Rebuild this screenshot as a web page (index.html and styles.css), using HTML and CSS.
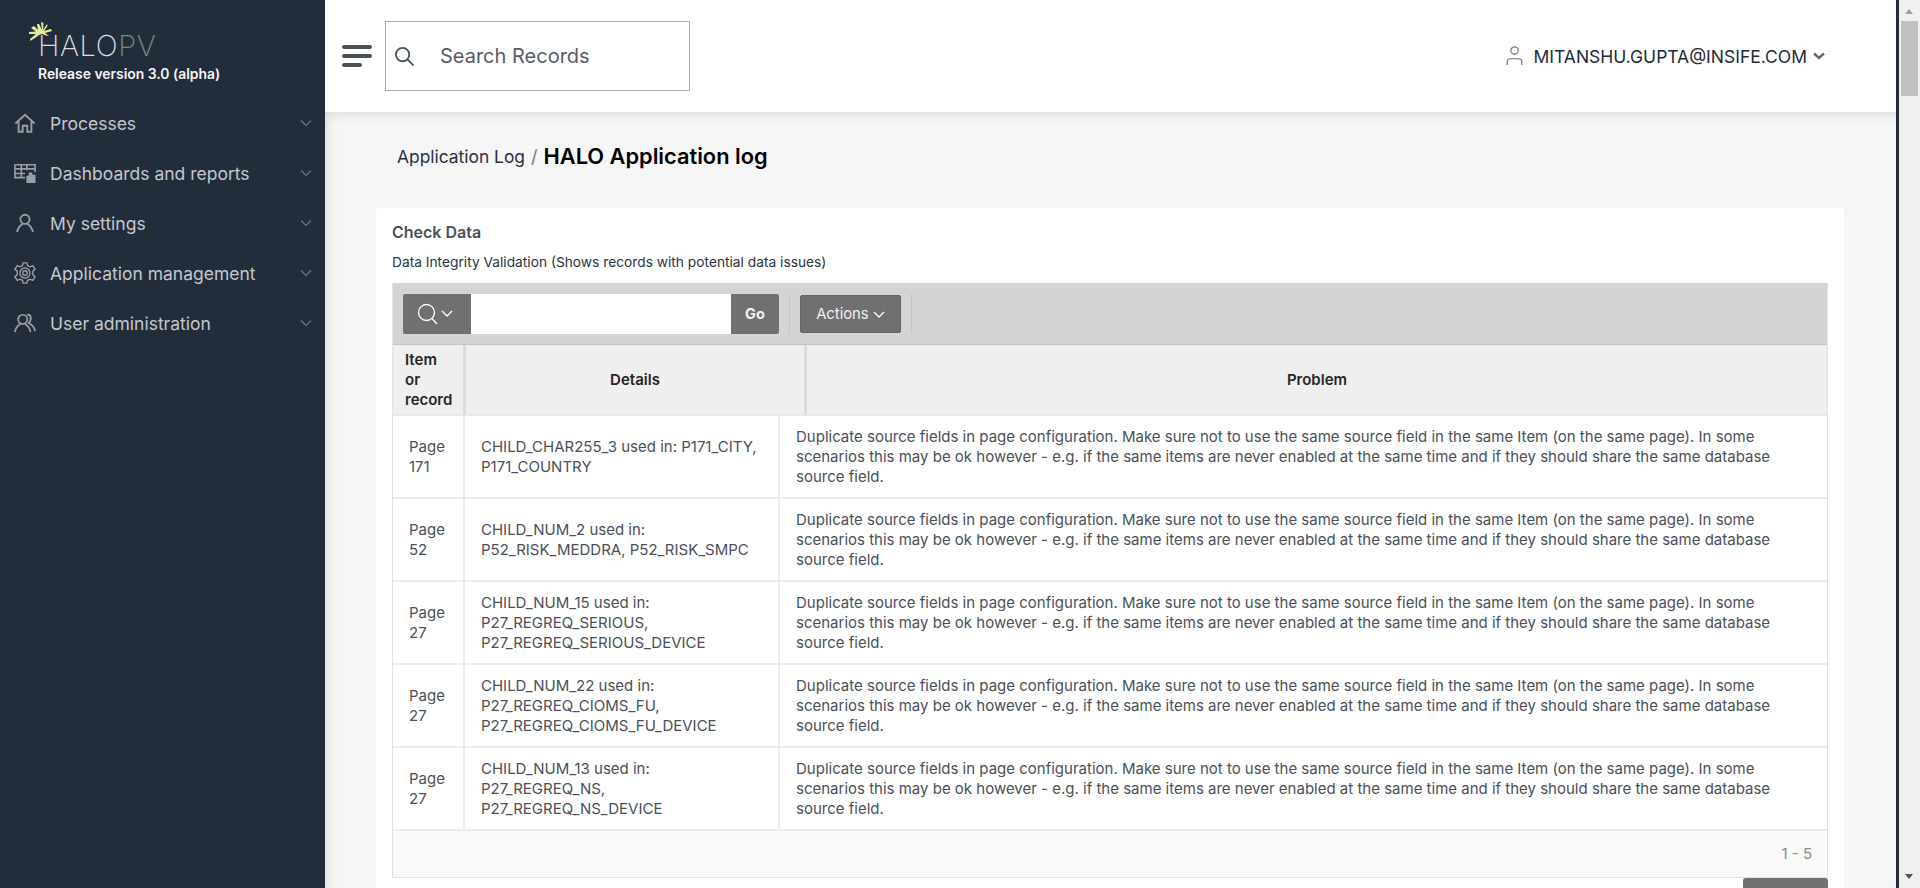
FILE: index.html
```html
<!DOCTYPE html>
<html lang="en">
<head>
    <meta charset="UTF-8">
    <title>HALO Application log</title>
    <link rel="stylesheet" href="styles.css">
</head>
<body>
    <div class="app">
        <!-- left navigation -->
        <aside class="sidebar">
            <div class="brand">
                <div class="logo">
                    <svg class="logo-spark" width="24" height="22" viewBox="0 0 24 22" fill="#e6eb9c">
                        <path d="M13 8 L12 0 L14.500 1 L14 8 L18 2 L18.500 4 L15 9 L22 7 L23 9 L16 11 L20 14 L17 13.500 L13 12 L10 13 L6 16 L1 19 L1 17 L7 12 L0 12 L0 10 L7 9.500 L2 6 L5 4 L9 8 L8 2 L10 2 Z"/>
                    </svg>
                    <span class="logo-halo">HALO</span><span class="logo-pv">PV</span>
                </div>
                <div class="release">Release version 3.0 (alpha)</div>
            </div>
            <nav class="nav">
                <a class="nav-item">
                    <svg class="nav-icon" viewBox="0 0 24 24" fill="none" stroke="currentColor" stroke-width="2"><path d="M1.500 12.500 L12 3 L22.500 12.500 M5 10 V21.500 H9.500 V15 H14.500 V21.500 H19 V10"/></svg>
                    <span class="nav-label">Processes</span>
                    <svg class="nav-caret" viewBox="0 0 12 8" fill="none" stroke="currentColor" stroke-width="1.200"><path d="M1 1.500 L6 6.500 L11 1.500"/></svg>
                </a>
                <a class="nav-item">
                    <svg class="nav-icon" viewBox="0 0 24 24" fill="none" stroke="currentColor" stroke-width="1.800"><path d="M1 3 H23 V11 M1 3 V17 H12 M1 7.500 H22 M1 12.500 H12 M8 3 V17 M14 3 V9"/><path d="M13.500 15 H16 V11.500 H20 V14 H23.500 V23 H13.500 Z" fill="currentColor" stroke="none"/></svg>
                    <span class="nav-label">Dashboards and reports</span>
                    <svg class="nav-caret" viewBox="0 0 12 8" fill="none" stroke="currentColor" stroke-width="1.200"><path d="M1 1.500 L6 6.500 L11 1.500"/></svg>
                </a>
                <a class="nav-item">
                    <svg class="nav-icon" viewBox="0 0 24 24" fill="none" stroke="currentColor" stroke-width="2"><circle cx="12" cy="8" r="5"/><path d="M3.500 22 C4 16.500 8 14 9.500 13 M20.500 22 C20 16.500 16 14 14.500 13"/></svg>
                    <span class="nav-label">My settings</span>
                    <svg class="nav-caret" viewBox="0 0 12 8" fill="none" stroke="currentColor" stroke-width="1.200"><path d="M1 1.500 L6 6.500 L11 1.500"/></svg>
                </a>
                <a class="nav-item">
                    <svg class="nav-icon" viewBox="0 0 24 24" fill="none" stroke="currentColor" stroke-width="1.500"><circle cx="12" cy="12" r="2.500"/><circle cx="12" cy="12" r="5.500"/><path d="M10 1 H14 L14.800 4 L17.500 5.300 L20.500 4 L23 8 L20.500 10 V14 L23 16 L20.500 20 L17.500 18.700 L14.800 20 L14 23 H10 L9.200 20 L6.500 18.700 L3.500 20 L1 16 L3.500 14 V10 L1 8 L3.500 4 L6.500 5.300 L9.200 4 Z"/></svg>
                    <span class="nav-label">Application management</span>
                    <svg class="nav-caret" viewBox="0 0 12 8" fill="none" stroke="currentColor" stroke-width="1.200"><path d="M1 1.500 L6 6.500 L11 1.500"/></svg>
                </a>
                <a class="nav-item">
                    <svg class="nav-icon" viewBox="0 0 24 24" fill="none" stroke="currentColor" stroke-width="1.900"><circle cx="9.500" cy="8" r="5"/><path d="M1 22 C1.500 17 4.500 14.500 7 13 M18 22 C17.500 17 14.500 14.500 12 13 M14 3 C18.500 2 20 8 16 12 C20 14 22.500 17 23 21"/></svg>
                    <span class="nav-label">User administration</span>
                    <svg class="nav-caret" viewBox="0 0 12 8" fill="none" stroke="currentColor" stroke-width="1.200"><path d="M1 1.500 L6 6.500 L11 1.500"/></svg>
                </a>
            </nav>
        </aside>

        <div class="main">
            <!-- top bar -->
            <header class="topbar">
                <div class="burger"><span></span><span></span><span class="short"></span></div>
                <div class="global-search">
                    <svg class="global-search-icon" viewBox="0 0 22 22" fill="none" stroke="#4c5560" stroke-width="2"><circle cx="9" cy="9" r="7"/><path d="M14 14 L20.500 20.500"/></svg>
                    <span>Search Records</span>
                </div>
                <div class="user">
                    <svg class="user-icon" viewBox="0 0 18 22" fill="none" stroke="#777" stroke-width="1.300"><circle cx="9" cy="5" r="4"/><path d="M1 21 V17 C1 15 3 14 5 14 H13 C15 14 17 15 17 17 V21"/></svg>
                    <span class="user-name">MITANSHU.GUPTA@INSIFE.COM</span>
                    <svg class="user-caret" viewBox="0 0 12 8" fill="none" stroke="#666" stroke-width="2.400"><path d="M1 1.500 L6 6 L11 1.500"/></svg>
                </div>
            </header>

            <div class="content">
                <div class="breadcrumb">
                    <span class="crumb">Application Log</span>
                    <span class="crumb-sep">/</span>
                    <h1 class="crumb-title">HALO Application log</h1>
                </div>

                <section class="card">
                    <h2 class="card-title">Check Data</h2>
                    <p class="card-sub">Data Integrity Validation (Shows records with potential data issues)</p>

                    <div class="report">
                        <div class="toolbar">
                            <div class="search-group">
                                <button class="btn btn-search">
                                    <svg width="21" height="22" viewBox="0 0 21 22" fill="none" stroke="#fff" stroke-width="1.300"><circle cx="9.500" cy="9.500" r="8"/><path d="M15 15.500 L20 21"/></svg>
                                    <svg width="12" height="8" viewBox="0 0 12 8" fill="none" stroke="#fff" stroke-width="1.300"><path d="M1 1 L6 6 L11 1"/></svg>
                                </button>
                                <div class="search-input"></div>
                                <button class="btn btn-go">Go</button>
                            </div>
                            <div class="toolbar-sep"></div>
                            <button class="btn btn-actions">Actions
                                <svg width="12" height="8" viewBox="0 0 12 8" fill="none" stroke="#fff" stroke-width="1.300"><path d="M1 1 L6 6 L11 1"/></svg>
                            </button>
                            <div class="toolbar-sep"></div>
                        </div>

                        <table class="grid grid-head">
                            <tr>
                                <th class="col-head-a left">Item or record</th>
                                <th class="col-head-b">Details</th>
                                <th>Problem</th>
                            </tr>
                        </table>

                        <table class="grid grid-body">
                            <tr>
                                <td class="col-a"><span class="page-no">Page 171</span></td>
                                <td class="col-b">CHILD_CHAR255_3 used in: P171_CITY, P171_COUNTRY</td>
                                <td>Duplicate source fields in page configuration. Make sure not to use the same source field in the same Item (on the same page). In some scenarios this may be ok however - e.g. if the same items are never enabled at the same time and if they should share the same database source field.</td>
                            </tr>
                            <tr>
                                <td class="col-a"><span class="page-no">Page 52</span></td>
                                <td class="col-b">CHILD_NUM_2 used in: P52_RISK_MEDDRA, P52_RISK_SMPC</td>
                                <td>Duplicate source fields in page configuration. Make sure not to use the same source field in the same Item (on the same page). In some scenarios this may be ok however - e.g. if the same items are never enabled at the same time and if they should share the same database source field.</td>
                            </tr>
                            <tr>
                                <td class="col-a"><span class="page-no">Page 27</span></td>
                                <td class="col-b">CHILD_NUM_15 used in: P27_REGREQ_SERIOUS, P27_REGREQ_SERIOUS_DEVICE</td>
                                <td>Duplicate source fields in page configuration. Make sure not to use the same source field in the same Item (on the same page). In some scenarios this may be ok however - e.g. if the same items are never enabled at the same time and if they should share the same database source field.</td>
                            </tr>
                            <tr>
                                <td class="col-a"><span class="page-no">Page 27</span></td>
                                <td class="col-b">CHILD_NUM_22 used in: P27_REGREQ_CIOMS_FU, P27_REGREQ_CIOMS_FU_DEVICE</td>
                                <td>Duplicate source fields in page configuration. Make sure not to use the same source field in the same Item (on the same page). In some scenarios this may be ok however - e.g. if the same items are never enabled at the same time and if they should share the same database source field.</td>
                            </tr>
                            <tr>
                                <td class="col-a"><span class="page-no">Page 27</span></td>
                                <td class="col-b">CHILD_NUM_13 used in: P27_REGREQ_NS, P27_REGREQ_NS_DEVICE</td>
                                <td>Duplicate source fields in page configuration. Make sure not to use the same source field in the same Item (on the same page). In some scenarios this may be ok however - e.g. if the same items are never enabled at the same time and if they should share the same database source field.</td>
                            </tr>
                        </table>

                        <div class="report-foot">1 - 5</div>
                    </div>
                    <div class="card-actions"><div class="btn-cut"></div></div>
                </section>
            </div>
        </div>

        <div class="edge"></div>
        <!-- page scrollbar -->
        <div class="scrollbar">
            <div class="arrow-up"></div>
            <div class="thumb"></div>
            <div class="arrow-down"></div>
        </div>
    </div>
</body>
</html>
```
FILE: styles.css
```css
*{
    margin: 0;
    padding: 0;
    box-sizing: border-box;
}
html,body{
    height: 100%;
    overflow: hidden;
}
body{
    font-family: Inter, "Liberation Sans", sans-serif;
    font-size: 15px;
    color: #4b5058;
}
.app{
    display: flex;
    height: 888px;
}

/* sidebar */
.sidebar{
    width: 325px;
    flex: none;
    background-color: #222d3b;
}
.brand{
    height: 98px;
    padding: 30px 0 0 38px;
}
.logo{
    position: relative;
    height: 32px;
    font-size: 29px;
    font-weight: 200;
    line-height: 32px;
    letter-spacing: .6px;
}
.logo-spark{
    position: absolute;
    left: -9px;
    top: -8px;
}
.logo-halo{
    color: #dcdfe1;
}
.logo-pv{
    color: #7a8b84;
}
.release{
    margin-top: 4px;
    font-size: 13.900px;
    font-weight: 600;
    line-height: 16px;
    color: #f4f5f6;
}
.nav-item{
    display: flex;
    align-items: center;
    height: 50px;
    padding: 0 13px 0 14px;
    color: #c4c8cc;
}
.nav-icon{
    width: 22px;
    height: 22px;
    flex: none;
    color: #9a9fa5;
}
.nav-label{
    flex: 1;
    margin-left: 14px;
    font-size: 17.500px;
}
.nav-caret{
    width: 12px;
    height: 8px;
    flex: none;
    color: #6f7680;
}

/* main column */
.main{
    flex: 1;
    min-width: 0;
    display: flex;
    flex-direction: column;
    background-color: #f6f6f6;
}
.topbar{
    height: 112px;
    flex: none;
    display: flex;
    align-items: center;
    padding: 0 71px 0 17px;
    background-color: #ffffff;
}
.burger{
    width: 30px;
    display: flex;
    flex-direction: column;
    gap: 5px;
    margin-right: 13px;
}
.burger span{
    height: 4px;
    border-radius: 2px;
    background-color: #4a505a;
}
.burger .short{
    width: 20px;
}
.global-search{
    width: 305px;
    height: 70px;
    display: flex;
    align-items: center;
    padding-left: 8px;
    border: 1px solid #a9a9a9;
    font-size: 20px;
    color: #565c66;
}
.global-search-icon{
    width: 21px;
    height: 21px;
    margin-right: 25px;
}
.user{
    margin-left: auto;
    display: flex;
    align-items: center;
    font-size: 17.500px;
    color: #222a3c;
}
.user-icon{
    width: 17px;
    height: 20px;
    margin-right: 11px;
}
.user-caret{
    width: 12px;
    height: 8px;
    margin-left: 6px;
}
.content{
    flex: 1;
    min-height: 0;
    padding: 0 52px 0 51px;
    box-shadow: inset 6px 6px 14px -6px rgba(0,0,0,.14);
}
.breadcrumb{
    height: 96px;
    display: flex;
    align-items: center;
    padding: 0 0 8px 21px;
}
.crumb{
    font-size: 17.400px;
    color: #2b3140;
}
.crumb-sep{
    margin: 0 6px;
    font-size: 18px;
    color: #777;
}
.crumb-title{
    font-size: 21.800px;
    font-weight: 600;
    color: #000000;
}

/* card */
.card{
    height: 700px;
    padding: 16px 16px 0;
    background-color: #ffffff;
    border-radius: 3px;
}
.card-title{
    font-size: 16px;
    font-weight: 600;
    line-height: 17px;
    color: #4b5058;
}
.card-sub{
    margin-top: 13px;
    font-size: 13.750px;
    line-height: 16px;
    color: #2e3340;
}
.report{
    margin-top: 13px;
    border: 1px solid #e2e2e2;
    border-top: none;
}
.toolbar{
    height: 62px;
    display: flex;
    align-items: center;
    padding-left: 10px;
    background-color: #d4d4d4;
    border-bottom: 1px solid #c4c4c4;
}
.search-group{
    display: flex;
    height: 40px;
}
.btn{
    border: none;
    font-family: inherit;
    color: #ffffff;
    background-color: #707070;
    border-radius: 2px;
}
.btn-search{
    width: 68px;
    display: flex;
    align-items: center;
    justify-content: center;
    gap: 3px;
    padding-right: 4px;
    border-radius: 2px 0 0 2px;
}
.search-input{
    width: 260px;
    background-color: #ffffff;
}
.btn-go{
    width: 48px;
    font-size: 14.500px;
    font-weight: 700;
    border-radius: 0 2px 2px 0;
    color: #f2f2f2;
}
.toolbar-sep{
    width: 1px;
    height: 40px;
    margin: 0 10px;
    background-color: #c4c4c4;
}
.btn-actions{
    width: 101px;
    height: 38px;
    font-size: 14.800px;
    border: 1px solid #666;
    color: #f0f0f0;
}

/* tables */
.grid{
    width: 100%;
    table-layout: fixed;
    border-collapse: separate;
    border-spacing: 0;
}
.grid th{
    height: 71px;
    padding: 0 16px;
    font-size: 15px;
    font-weight: 600;
    line-height: 20px;
    color: #262626;
    text-align: center;
    background-color: #efefef;
    border-bottom: 2px solid #e8e8e8;
}
.grid th.left{
    text-align: left;
    padding: 0 14px 0 12px;
}
.col-head-a{
    width: 73px;
    border-right: 3px solid #dcdcdc;
}
.col-head-b{
    width: 341px;
    border-right: 3px solid #dcdcdc;
}
.grid td{
    height: 83px;
    padding: 0 16px;
    font-size: 15px;
    line-height: 20px;
    vertical-align: middle;
    border-bottom: 2px solid #ececec;
}
.col-a{
    width: 72px;
    border-right: 2px solid #ececec;
}
.col-b{
    width: 315px;
    border-right: 2px solid #ececec;
}
.page-no{
    display: block;
}
.report-foot{
    height: 46px;
    padding-right: 15px;
    font-size: 15px;
    line-height: 46px;
    text-align: right;
    color: #8a8a8a;
    background-color: #f9f9f9;
}
.card-actions{
    display: flex;
    justify-content: flex-end;
}
.btn-cut{
    width: 85px;
    height: 30px;
    background-color: #707070;
    border-radius: 3px 3px 0 0;
}

/* scrollbar */
.edge{
    width: 3px;
    flex: none;
    background-color: #222d3b;
}
.scrollbar{
    width: 21px;
    flex: none;
    position: relative;
    background-color: #f0f0f0;
}
.thumb{
    position: absolute;
    left: 2px;
    top: 21px;
    width: 17px;
    height: 75px;
    background-color: #c0c0c0;
}
.arrow-up,.arrow-down{
    position: absolute;
    left: 6px;
    width: 0;
    height: 0;
    border-left: 4px solid transparent;
    border-right: 4px solid transparent;
}
.arrow-up{
    top: 9px;
    border-bottom: 5px solid #a0a0a0;
}
.arrow-down{
    bottom: 9px;
    border-top: 5px solid #505050;
}
```
